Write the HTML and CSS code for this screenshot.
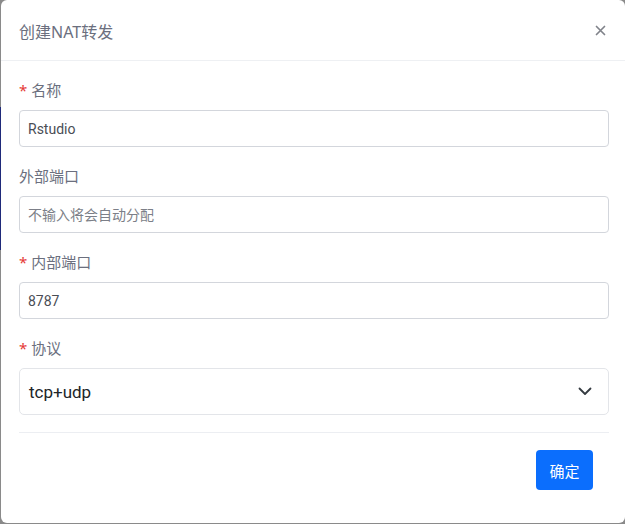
FILE: index.html
```html
<!DOCTYPE html>
<html lang="zh-CN">
<head>
    <meta charset="UTF-8">
    <meta name="viewport" content="width=device-width, initial-scale=1.0">
    <title>创建NAT转发</title>
    <link rel="stylesheet" href="styles.css">
</head>
<body>
    <div class="modal">
        <!-- Header -->
        <div class="modal-header">
            <h5 class="modal-title">创建NAT转发</h5>
            <button type="button" class="close-btn" aria-label="Close">
                <svg width="11" height="11" viewBox="0 0 11 11">
                    <path d="M1.5 1.5 L9.5 9.5 M9.5 1.5 L1.5 9.5" stroke="#80838a" stroke-width="1.7" stroke-linecap="round"/>
                </svg>
            </button>
        </div>

        <!-- Body -->
        <form class="modal-body">
            <div class="field">
                <label><span class="req">*</span> 名称</label>
                <input type="text" value="Rstudio">
            </div>
            <div class="field">
                <label>外部端口</label>
                <input type="text" placeholder="不输入将会自动分配">
            </div>
            <div class="field">
                <label><span class="req">*</span> 内部端口</label>
                <input type="text" value="8787">
            </div>
            <div class="field">
                <label><span class="req">*</span> 协议</label>
                <div class="select">
                    <span>tcp+udp</span>
                    <svg width="14" height="9" viewBox="0 0 14 9">
                        <path d="M1.5 1.5 L7 7 L12.5 1.5" fill="none" stroke="#343a40" stroke-width="1.8" stroke-linecap="round" stroke-linejoin="round"/>
                    </svg>
                </div>
            </div>
        </form>

        <!-- Footer -->
        <div class="modal-footer">
            <button type="button" class="btn-primary">确定</button>
        </div>
    </div>
</body>
</html>
```

FILE: styles.css
```css
body {
    margin: 0;
    height: 524px;
    overflow: hidden;
    background: linear-gradient(to bottom, #8a8a8a 0, #8a8a8a 107px, #1f2a7a 107px, #1f2a7a 250px, #8a8a8a 250px);
    font-family: "Noto Sans", "Noto Sans CJK SC", sans-serif;
}
.modal {
    margin-left: 1px;
    height: 523px;
    background-color: #ffffff;
    border-radius: 6px;
    display: flex;
    flex-direction: column;
}
.modal-header {
    height: 60px;
    padding: 0 16px 0 18px;
    display: flex;
    align-items: center;
    justify-content: space-between;
    border-bottom: 1px solid #eef0f3;
}
.modal-title {
    margin: 0;
    font-size: 16px;
    font-weight: 400;
    color: #6b6f7e;
    padding-top: 2px;
}
.close-btn {
    border: none;
    background: none;
    padding: 0;
    margin-right: 2px;
    width: 14px;
    height: 14px;
    display: flex;
    align-items: center;
    justify-content: center;
    cursor: pointer;
}
.modal-body {
    padding: 18px 16px 0 18px;
    display: flex;
    flex-direction: column;
    gap: 18px;
}
.field {
    display: flex;
    flex-direction: column;
    gap: 9px;
}
label {
    font-size: 15px;
    line-height: 22px;
    height: 22px;
    color: #6b6f7e;
}
.req {
    color: #e53935;
}
input {
    height: 37px;
    box-sizing: border-box;
    padding: 0 8px;
    border: 1px solid #d3d6dc;
    border-radius: 4px;
    font-family: Roboto, "Noto Sans CJK SC", sans-serif;
    font-size: 14px;
    color: #4a4d55;
    outline: none;
}
input::placeholder {
    color: #7c7f88;
    font-size: 14px;
}
.select {
    height: 47px;
    box-sizing: border-box;
    padding: 0 16px 0 9px;
    border: 1px solid #e3e5e9;
    border-radius: 5px;
    display: flex;
    align-items: center;
    justify-content: space-between;
    font-family: Roboto, sans-serif;
    font-size: 17px;
    color: #212529;
}
.modal-footer {
    margin: 17px 16px 0 18px;
    padding-top: 17px;
    border-top: 1px solid #eceef2;
    display: flex;
    justify-content: flex-end;
}
.btn-primary {
    width: 57px;
    height: 40px;
    margin-right: 16px;
    border: none;
    border-radius: 4px;
    background-color: #0b6efd;
    color: #ffffff;
    font-family: inherit;
    font-size: 15px;
    cursor: pointer;
}
```
